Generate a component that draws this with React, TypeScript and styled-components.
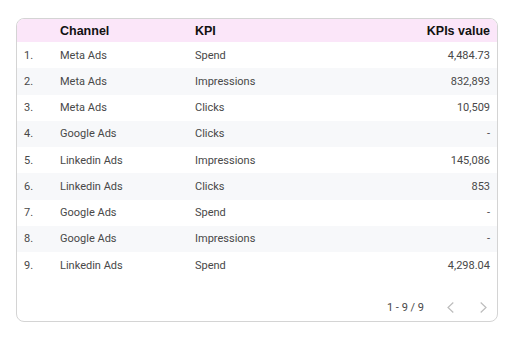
import React from "react";
import styled, { createGlobalStyle } from "styled-components";

type Row = {
  channel: string;
  kpi: string;
  value: string;
};

const rows: Array<Row> = [
  { channel: "Meta Ads", kpi: "Spend", value: "4,484.73" },
  { channel: "Meta Ads", kpi: "Impressions", value: "832,893" },
  { channel: "Meta Ads", kpi: "Clicks", value: "10,509" },
  { channel: "Google Ads", kpi: "Clicks", value: "-" },
  { channel: "Linkedin Ads", kpi: "Impressions", value: "145,086" },
  { channel: "Linkedin Ads", kpi: "Clicks", value: "853" },
  { channel: "Google Ads", kpi: "Spend", value: "-" },
  { channel: "Google Ads", kpi: "Impressions", value: "-" },
  { channel: "Linkedin Ads", kpi: "Spend", value: "4,298.04" },
];

const Global = createGlobalStyle`
  body {
    margin: 0;
    background: #fff;
    font-family: Roboto, "Liberation Sans", Arial, sans-serif;
  }
`;

const Page = styled.main`
  padding: 18px 20px 0 16px;
  width: 518px;
  height: 340px;
  box-sizing: border-box;
`;

const Card = styled.section`
  height: 304px;
  border: 1px solid #d4d4d4;
  border-radius: 8px;
  overflow: hidden;
  box-sizing: border-box;
  display: flex;
  flex-direction: column;
`;

const Grid = styled.div<{ $head?: boolean; $striped?: boolean }>`
  display: grid;
  grid-template-columns: 36px 135px 1fr 120px;
  align-items: center;
  flex: none;
  height: ${(p) => (p.$head ? "23px" : "26.25px")};
  padding: 0 7px;
  background: ${(p) => (p.$head ? "#fbe6f9" : p.$striped ? "#f7f8fa" : "#fff")};
  color: ${(p) => (p.$head ? "#111" : "#484848")};
  font-size: ${(p) => (p.$head ? "12.5px" : "11px")};
  font-weight: ${(p) => (p.$head ? 700 : 400)};
  font-family: ${(p) => (p.$head ? '"Liberation Sans", Arial, sans-serif' : "Roboto, sans-serif")};
  white-space: nowrap;

  .value {
    text-align: right;
  }
`;

const Footer = styled.footer`
  margin-top: auto;
  height: 28px;
  display: flex;
  align-items: center;
  justify-content: flex-end;
  padding: 15px 4px 0 0;
  font-family: Roboto, sans-serif;
  font-size: 11px;
  color: #484848;

  .range {
    margin-right: 16px;
  }
`;

const Nav = styled.button<{ $gap?: number }>`
  border: 0;
  background: none;
  padding: 0;
  width: 20px;
  height: 16px;
  margin-left: ${(p) => p.$gap ?? 0}px;
  display: flex;
  align-items: center;
  justify-content: center;
  cursor: default;
`;

const Chevron = ({ dir }: { dir: "left" | "right" }) => (
  <svg width="7" height="11" viewBox="0 0 7 11">
    <path
      d={dir === "left" ? "M6.3 0.5 L1 5.5 L6.3 10.5" : "M0.7 0.5 L6 5.5 L0.7 10.5"}
      fill="none"
      stroke="#bdbdbd"
      strokeWidth="1.2"
    />
  </svg>
);

export default () => {
  return (
    <Page>
      <Global />
      <Card>
        <Grid $head>
          <span />
          <span>Channel</span>
          <span>KPI</span>
          <span className="value">KPIs value</span>
        </Grid>
        {rows.map((row, index) => (
          <Grid key={index} $striped={index % 2 === 1}>
            <span>{index + 1}.</span>
            <span>{row.channel}</span>
            <span>{row.kpi}</span>
            <span className="value">{row.value}</span>
          </Grid>
        ))}
        <Footer>
          <span className="range">1 - 9 / 9</span>
          <Nav>
            <Chevron dir="left" />
          </Nav>
          <Nav $gap={13}>
            <Chevron dir="right" />
          </Nav>
        </Footer>
      </Card>
    </Page>
  );
};
